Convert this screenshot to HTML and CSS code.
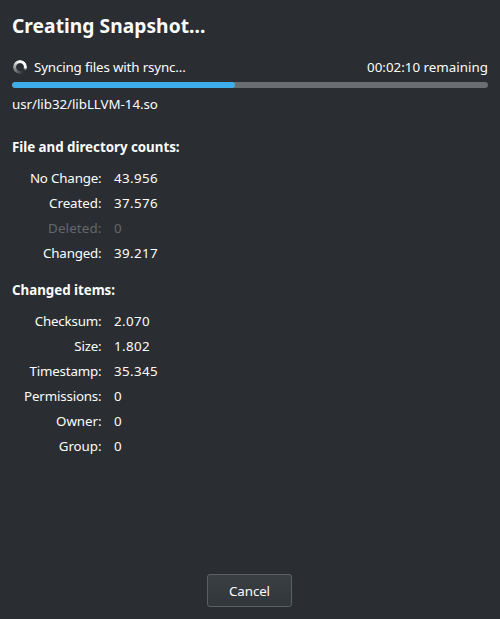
FILE: index.html
```html
<!DOCTYPE html>
<html lang="en">
<head>
<meta charset="utf-8">
<title>Creating Snapshot</title>
<link rel="stylesheet" href="styles.css">
</head>
<body>
<main class="window">
  <h1>Creating Snapshot...</h1>
  <div class="status">
    <div class="spinner"></div>
    <span class="task">Syncing files with rsync...</span>
    <span class="remaining">00:02:10 remaining</span>
  </div>
  <div class="progress"><div class="bar"></div></div>
  <p class="file">usr/lib32/libLLVM-14.so</p>
  <h2 class="counts">File and directory counts:</h2>
  <dl>
    <dt>No Change:</dt><dd>43.956</dd>
    <dt class="wide">Created:</dt><dd>37.576</dd>
    <dt class="off">Deleted:</dt><dd class="off">0</dd>
    <dt>Changed:</dt><dd>39.217</dd>
  </dl>
  <h2 class="items">Changed items:</h2>
  <dl>
    <dt>Checksum:</dt><dd>2.070</dd>
    <dt>Size:</dt><dd>1.802</dd>
    <dt>Timestamp:</dt><dd>35.345</dd>
    <dt>Permissions:</dt><dd>0</dd>
    <dt class="wide">Owner:</dt><dd>0</dd>
    <dt class="wide">Group:</dt><dd>0</dd>
  </dl>
  <button type="button">Cancel</button>
</main>
</body>
</html>
```
FILE: styles.css
```css
* { box-sizing: border-box; }
body { margin: 0; background: #2a2e32; color: #fcfcfc; font: 13.333px/19px "Noto Sans", sans-serif; }
.window { display: flex; flex-direction: column; height: 619px; padding: 12px; }
h1 { margin: 0; font-size: 19.2px; line-height: 28px; letter-spacing: 0.05px; }
.status { display: flex; align-items: center; height: 20px; margin-top: 17px; }
.spinner {
  width: 14px; height: 14px; margin: 0 7px 1px 1px; border-radius: 50%;
  background: conic-gradient(#fff 0deg, #fff 95deg, #2a2e32 125deg, #36393d 160deg, #63666a 210deg, #a0a2a4 270deg, #e8e8e8 330deg, #fff 360deg);
  -webkit-mask: radial-gradient(circle, transparent 3.4px, #000 4.4px);
  mask: radial-gradient(circle, transparent 3.4px, #000 4.4px);
}
.task { letter-spacing: -0.14px; }
.remaining { margin-left: auto; letter-spacing: 0.02px; }
.progress { height: 6px; margin-top: 5px; border-radius: 3px; background: #6a6e71; overflow: hidden; flex: none; }
.bar { width: 223px; height: 6px; background: #3daee9; border-radius: 3px; }
.file { margin: 7px 0 0; letter-spacing: -0.04px; }
h2 { margin: 0; font-size: 13.333px; line-height: 19px; letter-spacing: -0.02px; }
.counts { margin-top: 24px; }
.items { margin-top: 15px; }
dl { display: grid; grid-template-columns: 89.5px 1fr; column-gap: 12.5px; grid-auto-rows: 25px; align-items: center; margin: 9px 0 0; }
dt { text-align: right; letter-spacing: -0.17px; }
dt.wide { letter-spacing: -0.04px; }
dt.off { letter-spacing: 0.15px; }
dd { margin: 0; letter-spacing: 0.38px; }
.off { color: #63676a; }
button { width: 85px; height: 33px; margin: auto auto 0 195px; padding: 1px 0 0; border: 1px solid #5d6063; border-radius: 3px; background: linear-gradient(#3a3f43, #31363b); color: inherit; font: inherit; letter-spacing: -0.1px; }
```
